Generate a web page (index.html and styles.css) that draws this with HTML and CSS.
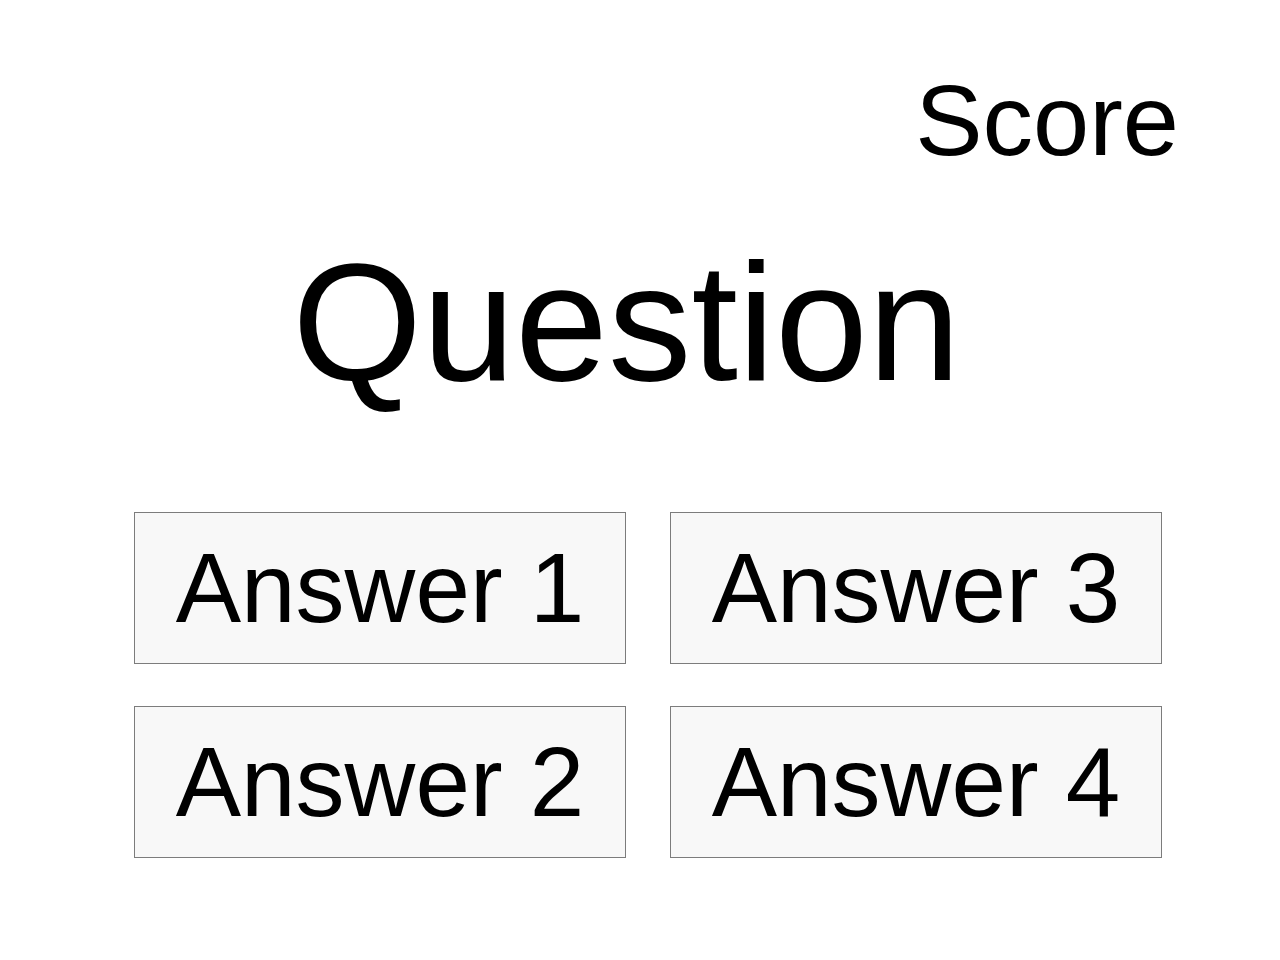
FILE: index.html
```html
<!DOCTYPE html>
<html lang="en">
<head>
<meta charset="utf-8">
<title>Quiz</title>
<link rel="stylesheet" href="styles.css">
</head>
<body>
<div class="page">
  <header class="header">
    <div class="score">Score</div>
  </header>
  <h1 class="question">Question</h1>
  <div class="answers">
    <button class="answer">Answer 1</button>
    <button class="answer">Answer 2</button>
    <button class="answer">Answer 3</button>
    <button class="answer">Answer 4</button>
  </div>
</div>
</body>
</html>
```
FILE: styles.css
```css
html, body {
  margin: 0;
  padding: 0;
  background: #ffffff;
}
body {
  font-family: "Liberation Sans", Arial, Helvetica, sans-serif;
  color: #000000;
}
.page {
  width: 1280px;
  height: 960px;
  display: flex;
  flex-direction: column;
}
.header {
  display: flex;
  justify-content: flex-end;
  padding: 70px 101px 0 0;
}
.score {
  font-size: 101px;
  line-height: 1;
}
.question {
  margin: 68px 0 0 0;
  padding-right: 27px;
  font-size: 167px;
  font-weight: normal;
  line-height: 1;
  text-align: center;
}
.answers {
  margin: 106px 0 0 134px;
  display: grid;
  grid-template-columns: 492px 492px;
  grid-template-rows: 152px 152px;
  grid-auto-flow: column;
  column-gap: 44px;
  row-gap: 42px;
}
.answer {
  box-sizing: border-box;
  margin: 0;
  padding: 0;
  border: 1px solid #7c7c7c;
  background: #f8f8f8;
  font-family: inherit;
  font-size: 98px;
  line-height: 1;
  color: #000000;
  text-align: center;
  display: flex;
  align-items: center;
  justify-content: center;
}
```
